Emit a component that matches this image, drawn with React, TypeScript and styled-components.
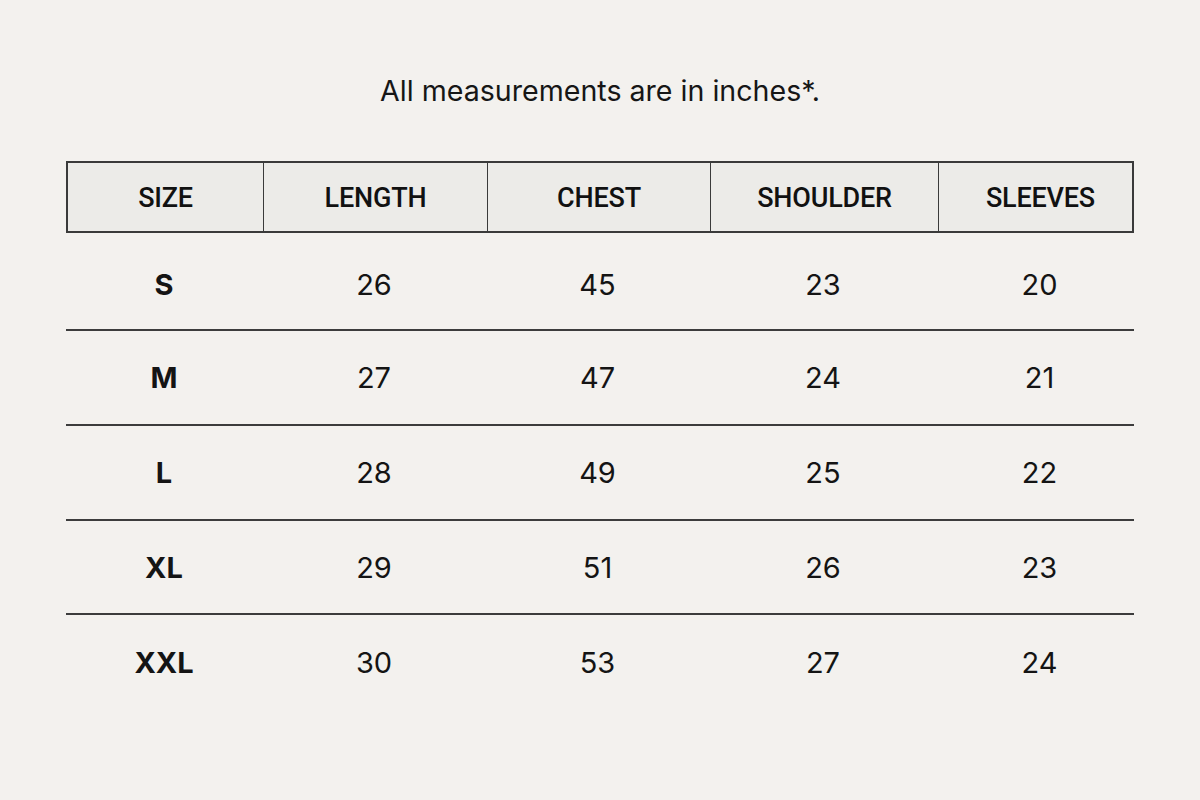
import React from "react";
import styled, { createGlobalStyle } from "styled-components";

const Global = createGlobalStyle`
  html, body { margin: 0; padding: 0; background: #f3f1ee; }
  body { font-family: Inter, "Liberation Sans", Arial, sans-serif; color: #111; }
`;

const Page = styled.div`
  width: 1200px;
  height: 800px;
  box-sizing: border-box;
  padding: 73px 66px 0 66px;
  display: flex;
  flex-direction: column;
  align-items: stretch;
`;

const Title = styled.p`
  margin: 0;
  text-align: center;
  font-size: 28.6px;
  line-height: 36px;
  font-weight: 400;
  color: #161616;
`;

const Table = styled.div`
  margin-top: 52px;
  display: flex;
  flex-direction: column;
`;

const cols = "196px 224px 223px 228px 197px";

const HeaderRow = styled.div`
  display: grid;
  grid-template-columns: ${cols};
  height: 72px;
  box-sizing: border-box;
  border: 2px solid #3a3a3a;
  background: #ecebe8;
`;

const HeadCell = styled.div<{ $last?: boolean }>`
  display: flex;
  align-items: center;
  justify-content: center;
  padding-top: 2px;
  padding-left: ${(p) => (p.$last ? "6px" : "0")};
  font-family: Roboto, "Liberation Sans", sans-serif;
  font-weight: 500;
  font-size: 27px;
  letter-spacing: -0.2px;
  color: #111;
  border-right: ${(p) => (p.$last ? "none" : "1.5px solid #3a3a3a")};
`;

const Row = styled.div<{ $h: number; $line: boolean; $padTop: number }>`
  display: grid;
  grid-template-columns: ${cols};
  height: ${(p) => p.$h}px;
  padding-top: ${(p) => p.$padTop}px;
  box-sizing: border-box;
  border-bottom: ${(p) => (p.$line ? "2px solid #3c3c3c" : "none")};
`;

const Cell = styled.div<{ $bold?: boolean; $last?: boolean }>`
  display: flex;
  align-items: center;
  justify-content: center;
  padding-left: ${(p) => (p.$last ? "8px" : "0")};
  font-size: 29px;
  font-weight: ${(p) => (p.$bold ? 700 : 400)};
  color: #141414;
`;

const headers = ["SIZE", "LENGTH", "CHEST", "SHOULDER", "SLEEVES"];
const data: [string, number, number, number, number][] = [
  ["S", 26, 45, 23, 20],
  ["M", 27, 47, 24, 21],
  ["L", 28, 49, 25, 22],
  ["XL", 29, 51, 26, 23],
  ["XXL", 30, 53, 27, 24],
];
const heights = [98, 95, 95, 94, 94];

export default function App() {
  return (
    <>
      <Global />
      <Page>
        <Title>All measurements are in inches*.</Title>
        <Table>
          <HeaderRow>
            {headers.map((h, i) => (
              <HeadCell key={h} $last={i === headers.length - 1}>
                {h}
              </HeadCell>
            ))}
          </HeaderRow>
          {data.map((r, i) => (
            <Row
              key={r[0]}
              $h={heights[i]}
              $line={i < data.length - 1}
              $padTop={i === 0 ? 6 : 0}
            >
              {r.map((v, j) => (
                <Cell key={j} $bold={j === 0} $last={j === r.length - 1}>
                  {v}
                </Cell>
              ))}
            </Row>
          ))}
        </Table>
      </Page>
    </>
  );
}
